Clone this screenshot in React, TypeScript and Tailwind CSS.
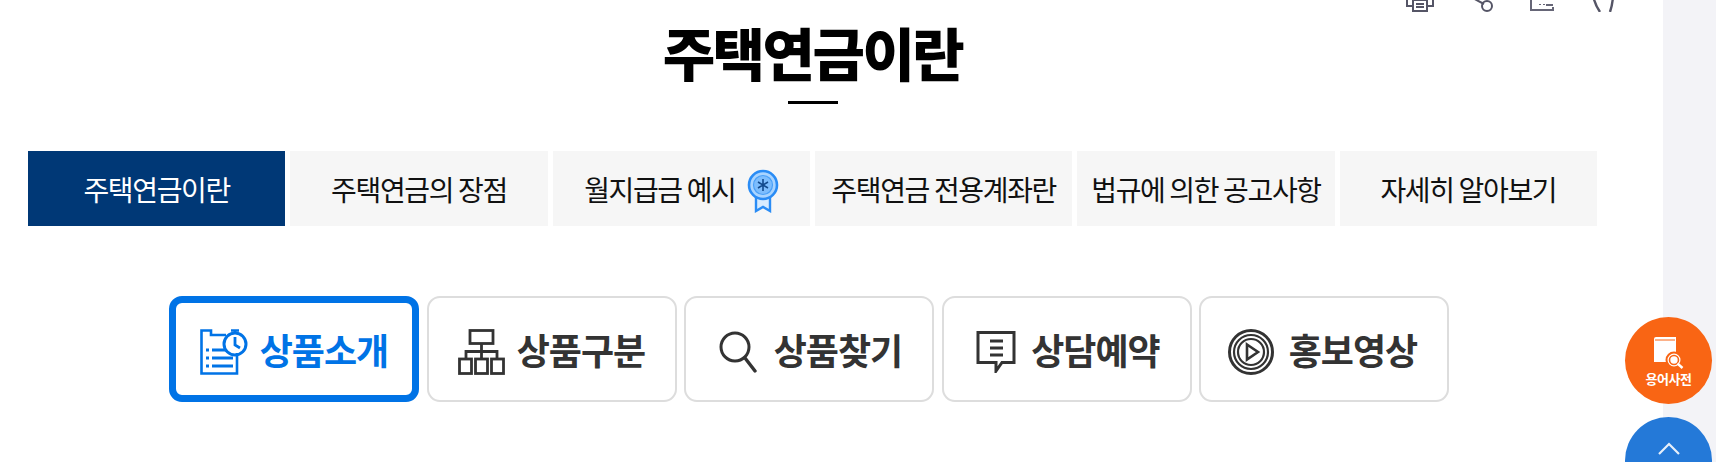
import React from "react";

const tabs = ["주택연금이란", "주택연금의 장점", "월지급금 예시", "주택연금 전용계좌란", "법규에 의한 공고사항", "자세히 알아보기"];

function Medal() {
  return (
    <svg width="32" height="44" viewBox="0 0 32 44" fill="none" className="ml-[11px] translate-y-[2px]">
      <path d="M9 25v17l7-4 7 4V25" fill="#d7ebff" stroke="#2a8cf5" strokeWidth="2.4" />
      <circle cx="16" cy="16" r="14" fill="#a9d4ff" stroke="#2a8cf5" strokeWidth="2.6" />
      <circle cx="16" cy="16" r="9.5" fill="#7dbdfd" stroke="#4aa0f7" strokeWidth="1.2" />
      <path d="M16 10v12M11 13l10 6M21 13l-10 6" stroke="#12498c" strokeWidth="1.6" />
    </svg>
  );
}

function ClipClock() {
  return (
    <svg width="48" height="46" viewBox="0 0 48 46" fill="none" stroke="#0073e6" strokeWidth="2.6">
      <path d="M26 6H11V1.500H1.500V44.500H37V24" />
      <path d="M6 21h3M12 21h14M6 29h3M12 29h21M6 37h3M12 37h21" strokeWidth="2.800" />
      <circle cx="35" cy="15" r="11" strokeWidth="3" />
      <path d="M35 8v8l5 3" strokeWidth="2.800" />
      <path d="M31 1.500h8M35 1v3" />
    </svg>
  );
}

function OrgChart() {
  return (
    <svg width="47" height="46" viewBox="0 0 47 46" fill="none" stroke="#333" strokeWidth="2.800">
      <rect x="12" y="1.500" width="23" height="13" />
      <path d="M23.500 14.500v8M8 30v-7.500h31V30M23.500 22.500V30" />
      <rect x="1.500" y="30" width="12" height="14.500" />
      <rect x="17.500" y="30" width="12" height="14.500" />
      <rect x="33.500" y="30" width="12" height="14.500" />
    </svg>
  );
}

function SearchGlass() {
  return (
    <svg width="38" height="42" viewBox="0 0 38 42" fill="none" stroke="#333" strokeWidth="3">
      <circle cx="16" cy="16" r="14" />
      <path d="M26 27l10 13" strokeWidth="3.400" strokeLinecap="round" />
    </svg>
  );
}

function ChatNote() {
  return (
    <svg width="40" height="42" viewBox="0 0 40 42" fill="none" stroke="#333" strokeWidth="3">
      <path d="M2 1.500h36v30H26L20 40v-8.500H2z" />
      <path d="M14 10h13M14 17h13M14 24h13" strokeWidth="3" />
    </svg>
  );
}

function PlayRings() {
  return (
    <svg width="46" height="46" viewBox="0 0 46 46" fill="none" stroke="#333">
      <circle cx="23" cy="23" r="21.500" strokeWidth="3" />
      <circle cx="23" cy="23" r="17" strokeWidth="2.200" />
      <circle cx="23" cy="23" r="13" strokeWidth="2.200" />
      <path d="M19 15.500l11 7.500-11 7.500z" strokeWidth="2.600" />
    </svg>
  );
}

const menus = [
  { label: "상품소개", icon: <ClipClock />, active: true, space: "gap-[12px]" },
  { label: "상품구분", icon: <OrgChart />, space: "gap-[12px]" },
  { label: "상품찾기", icon: <SearchGlass />, space: "gap-[17px] pl-[3px]" },
  { label: "상담예약", icon: <ChatNote />, space: "gap-[15px] pl-[3px]" },
  { label: "홍보영상", icon: <PlayRings />, space: "gap-[15px] pr-[3px]" },
];

function TopIcons() {
  return (
    <div className="-mr-[22px] flex h-[12px] items-end justify-end gap-[29px] overflow-hidden">
      <svg width="32" height="26" viewBox="0 0 32 26" fill="none" stroke="#555566" strokeWidth="2" className="shrink-0">
        <path d="M9 20H3V8h26v12h-6M9 14h14v11H9zM12 18h8M12 21h8" />
      </svg>
      <svg width="32" height="26" viewBox="0 0 32 26" fill="none" stroke="#555566" strokeWidth="2" className="shrink-0">
        <path d="M4 10l15 8" />
        <circle cx="22" cy="20" r="5" />
      </svg>
      <svg width="32" height="26" viewBox="0 0 32 26" fill="none" stroke="#666677" strokeWidth="2" className="shrink-0">
        <path d="M5 4v20h22v-3M14 13v1M14 18v1M18 18v1M20 19h7" />
      </svg>
      <svg width="32" height="26" viewBox="0 0 32 26" fill="none" stroke="#555566" strokeWidth="2.400" className="shrink-0">
        <path d="M6 6c0 7 3 14 7 20M26 8c0 6-1 12-3 18" />
      </svg>
    </div>
  );
}

export default function App() {
  return (
    <div className="relative flex h-[462px] overflow-hidden bg-[#f3f3f7] font-['Noto_Sans_CJK_KR','Noto_Sans',sans-serif]">
      <main className="w-[1663px] shrink-0 bg-white pl-[28px] pr-[66px]">
        <TopIcons />
        <h1 className="mt-[4px] text-center text-[57px] leading-[70px] font-black tracking-[-2.500px] text-black">주택연금이란</h1>
        <div className="mx-auto mt-[15px] h-[3px] w-[50px] bg-black" />
        <ul className="mt-[47px] grid grid-cols-6 gap-[5px]">
          {tabs.map((t, i) => (
            <li
              key={t}
              className={
                i === 0
                  ? "flex h-[75px] items-center justify-center bg-[#003876] text-[28px] tracking-[-1.350px] text-white"
                  : "flex h-[75px] items-center justify-center bg-[#f6f6f6] text-[28px] tracking-[-1.350px] text-[#111]"
              }
            >
              {t}
              {i === 2 && <Medal />}
            </li>
          ))}
        </ul>
        <div className="mt-[70px] ml-[141px] flex gap-[7.500px]">
          {menus.map((m) => (
            <a
              key={m.label}
              className={
                m.active
                  ? `flex h-[106px] w-[250px] items-center justify-center rounded-[13px] border-[7px] border-[#0073e6] text-[36px] font-bold tracking-[-1px] text-[#0073e6] ${m.space}`
                  : `flex h-[106px] w-[250px] items-center justify-center rounded-[13px] border-2 border-[#dddddd] text-[36px] font-bold tracking-[-1px] text-[#333] ${m.space}`
              }
            >
              <span className="translate-y-[3px]">{m.icon}</span>
              {m.label}
            </a>
          ))}
        </div>
      </main>

      <a className="absolute top-[317px] left-[1625px] flex h-[87px] w-[87px] flex-col items-center rounded-full bg-[#f96514] pt-[19px] text-white">
        <svg width="32" height="33" viewBox="0 0 32 33" fill="none">
          <path d="M1 3q0-2 2-2h20v25H1z" fill="#fff" />
          <path d="M2 4h20" stroke="#f96514" strokeWidth="1" />
          <circle cx="21" cy="24" r="7.500" fill="#fff" stroke="#f96514" strokeWidth="2" />
          <circle cx="21" cy="24" r="4.500" fill="none" stroke="#f96514" strokeWidth="1.600" />
          <path d="M24.500 27.500l5 4.500" stroke="#fff" strokeWidth="2.400" />
        </svg>
        <span className="mt-[1px] text-[13px] leading-[18px] font-bold tracking-[-0.500px]">용어사전</span>
      </a>
      <a className="absolute top-[417px] left-[1625px] flex h-[87px] w-[87px] justify-center rounded-full bg-[#2479d8] pt-[25px]">
        <svg width="22" height="13" viewBox="0 0 22 13" fill="none" stroke="#e6effa" strokeWidth="2.200">
          <path d="M1 12L11 2l10 10" />
        </svg>
      </a>
    </div>
  );
}
